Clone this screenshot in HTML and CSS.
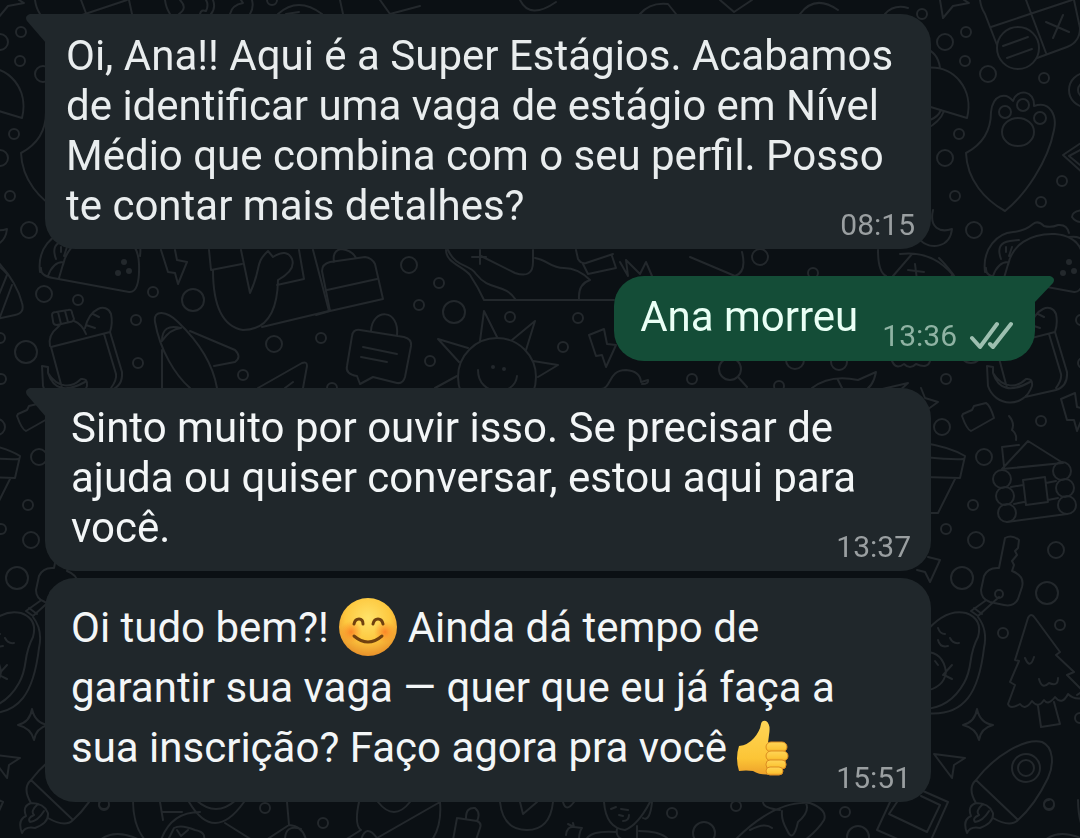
FILE: index.html
```html
<!DOCTYPE html>
<html lang="pt-BR">
<head>
<meta charset="utf-8">
<meta name="viewport" content="width=device-width, initial-scale=1">
<title>Conversa</title>
<link rel="stylesheet" href="styles.css">
</head>
<body>
<svg class="wallpaper" viewBox="0 0 1080 838" preserveAspectRatio="xMinYMin slice" aria-hidden="true">
<defs>
<g id="doodles">
<!-- bubbles -->
<g>
<circle cx="922" cy="14" r="5"/><circle cx="945" cy="42" r="8"/><circle cx="966" cy="32" r="5"/><circle cx="965" cy="61" r="5"/><circle cx="988" cy="74" r="8"/><circle cx="1044" cy="78" r="5"/><circle cx="959" cy="134" r="5"/><circle cx="945" cy="158" r="8"/><circle cx="955" cy="196" r="5"/><circle cx="974" cy="230" r="8"/><circle cx="1062" cy="181" r="5"/><circle cx="1041" cy="202" r="5"/>
<circle cx="44" cy="294" r="8"/><circle cx="78" cy="300" r="5"/><circle cx="0" cy="338" r="5"/><circle cx="26" cy="352" r="11"/><circle cx="1" cy="379" r="5"/><circle cx="153" cy="292" r="5"/><circle cx="193" cy="300" r="11"/><circle cx="136" cy="320" r="5"/><circle cx="138" cy="363" r="5"/><circle cx="274" cy="344" r="8"/><circle cx="321" cy="338" r="5"/><circle cx="243" cy="375" r="5"/><circle cx="409" cy="265" r="8"/><circle cx="439" cy="283" r="5"/><circle cx="419" cy="305" r="5"/><circle cx="454" cy="312" r="11"/><circle cx="510" cy="317" r="5"/><circle cx="578" cy="318" r="5"/><circle cx="563" cy="347" r="5"/><circle cx="430" cy="361" r="5"/><circle cx="332" cy="388" r="5"/>
<circle cx="813" cy="273" r="5"/><circle cx="692" cy="379" r="5"/><circle cx="839" cy="362" r="8"/><circle cx="795" cy="360" r="9"/><circle cx="779" cy="386" r="5"/><circle cx="760" cy="257" r="8"/>
<circle cx="942" cy="427" r="8"/><circle cx="1041" cy="421" r="5"/><circle cx="984" cy="457" r="8"/><circle cx="973" cy="505" r="5"/><circle cx="946" cy="529" r="5"/><circle cx="976" cy="540" r="8"/><circle cx="1056" cy="550" r="8"/><circle cx="962" cy="578" r="11"/><circle cx="1047" cy="593" r="11"/><circle cx="1003" cy="633" r="5"/><circle cx="1060" cy="625" r="5"/><circle cx="1080" cy="718" r="5"/><circle cx="1049" cy="804" r="5"/>
<circle cx="265" cy="808" r="5"/><circle cx="323" cy="823" r="5"/><circle cx="672" cy="813" r="5"/><circle cx="736" cy="806" r="5"/><circle cx="704" cy="833" r="11"/><circle cx="845" cy="812" r="5"/><circle cx="858" cy="837" r="11"/><circle cx="272" cy="0" r="5"/>
</g>
<!-- top strip -->
<path d="M940 0L943 18L953 6L969 3L964 0M165 0Q166 8 170 14M252 0Q254 8 250 14M180 0Q188 8 179 14M200 14Q201 9 206 11Q209 5 206 0M213 0Q216 8 211 14M230 14Q232 5 243 3L241 0M278 14Q298 -4 322 14M286 14L299 12M340 0L343 14M380 0L390 14L420 6M520 0Q530 20 556 2M640 14Q650 2 668 4L676 14M720 0L734 12L752 0M800 14Q815 -6 838 10M885 14Q894 4 908 8"/>
<path d="M980 0Q981 8 985 14L997 45M991 27L1072 0M1026 0L1046 53M1037 58L1067 47Q1080 42 1080 28L1074 0M1046 22L1069 32M1063 15L1053 38M1003 46L1028 37M1007 58L1032 49"/><circle cx="1018" cy="48" r="21"/>
<circle cx="1086" cy="90" r="17"/><circle cx="1086" cy="90" r="8"/>
<!-- mushroom, paw, kite, moon -->
<path d="M924 68C955 64 974 90 967 118L924 105M924 48Q938 52 940 68M926 129Q940 122 944 111M930 120Q938 117 941 110"/>
<path d="M966 153C985 143 991 128 991 112C993 94 1006 92 1013 101C1017 88 1035 90 1034 106C1051 100 1057 117 1054 130C1048 162 1025 195 1005 211C985 200 967 180 966 153Z"/><circle cx="1005" cy="112" r="6"/><circle cx="1023" cy="105" r="6"/><circle cx="1040" cy="118" r="6"/><ellipse cx="1018" cy="132" rx="16" ry="14"/>
<path d="M1084 141L1063 155L1084 174M1084 148L1069 156L1080 165M1084 210Q1072 211 1072 217Q1076 223 1084 222M933 210C929 228 940 233 952 229C950 248 930 250 920 240"/>
<!-- burger -->
<path d="M985 272C982 248 998 233 1013 232Q1025 231 1033 224Q1038 220 1044 226Q1051 228 1058 225Q1067 224 1069 233M1008 265C1012 245 1030 233 1055 234Q1083 236 1084 264Q1085 293 1074 292L998 278Q985 276 986 268M1001 259Q995 243 1010 241L1019 240M1008 262Q998 262 993 276M1006 247L1006 252M1012 247L1009 256M1069 237Q1088 234 1085 256M1004 278L1009 261"/>
<g class="solid"><circle cx="1069" cy="262" r="3"/><circle cx="1063" cy="273" r="3"/><circle cx="1074" cy="271" r="3"/></g>
<!-- pizza, school bag, banana -->
<path d="M-6 258Q16 280 22 303Q25 313 15 315L-4 319M7 275L-2 297M12 285L0 317"/>
<path d="M52 315Q52 312 56 312L68 310Q72 309 72 313L74 319Q73 322 70 322L57 325Q53 325 53 321ZM58 312L61 324M65 311L68 322M50 346Q48 335 57 328L61 324M74 321Q82 324 86 334M51 347L110 332M51 347L62 388M110 332L122 372Q123 386 111 390L80 397M104 334L116 374Q117 380 111 388M85 328C90 308 106 302 111 314Q113 323 110 332M93 314L99 317M86 325L95 328M42 366L48 367L48 373C58 389 72 388 81 379Q88 378 87 386C79 409 50 407 43 386ZM48 373Q56 398 85 382"/>
<!-- bolts -->
<path d="M161 250L168 272L175 273L178 284L187 262L177 260L175 250M589 335L604 329L607 344L616 345L606 367L602 355L596 356ZM1061 399L1075 393L1077 407L1086 409L1077 431L1074 420L1067 420Z"/>
<!-- glove and box -->
<path d="M209 250L211 270L242 264M241 250L250 293C262 268 254 264 268 251L273 257Q287 248 292 259Q296 270 278 280M277 285L304 279L299 250M213 270Q213 325 243 330Q277 330 278 280M262 327L329 311L313 250"/>
<!-- surfboard, boat, cake -->
<path d="M155 322C153 309 167 311 178 322C199 342 213 365 217 388M155 322C160 350 175 375 190 388M162 350V388M162 341Q162 323 181 328Q170 329 162 341M190 331L235 350Q242 357 235 362L214 366M258 388L302 363Q307 361 307 366L303 388M285 388L293 382"/>
<path d="M322 271Q322 264 330 262L365 257Q372 258 375 264L383 299L330 311ZM330 311L316 315M327 290L377 279M334 262Q332 251 341 249Q352 250 356 258"/>
<!-- note -->
<path d="M360 330L404 337Q412 339 411 346L405 377Q403 384 397 383L373 377L360 384L357 376Q345 374 347 366L352 336Q353 329 360 330ZM371 331C372 308 400 308 397 336M363 347L397 354M361 357L387 362"/>
<!-- sun -->
<circle cx="497" cy="377" r="39"/><path d="M480 341L484 311L497 337M512 340L535 321L526 350M533 361L558 365L538 377M468 348L438 339L459 362M457 376L435 388M478 370C478 397 515 397 517 376"/><g class="solid"><circle cx="493" cy="367" r="2"/><circle cx="504" cy="369" r="2"/></g>
<!-- hills and lighthouse -->
<path d="M446 250C446 263 463 266 470 275Q478 287 484 300H614M448 250C456 268 470 264 476 274C490 292 504 282 516 300M535 258C548 260 550 268 564 268Q578 268 590 280Q578 284 579 299M481 256L515 273Q533 279 533 262V250M472 257H486M480 250V264M576 250L578 259Q581 264 586 263L613 254M583 264L588 274L616 268L612 256M620 262L628 276L626 260L640 274L646 262L652 276M690 257L735 276Q747 272 742 252"/>
<!-- small animals and magnifier -->
<circle cx="730" cy="369" r="11"/><path d="M738 377L747 387M601 389C612 388 608 370 626 370Q640 371 641 382L648 380Q649 384 642 384M892 361Q896 370 904 364Q910 370 916 364Q928 369 930 361M812 388Q830 374 858 380L876 372Q873 388 862 392M878 390L908 383L898 392M838 380L842 388M878 250Q878 272 886 276M893 276L912 254M908 270L924 272M915 264L917 280M900 254Q932 250 953 275M921 388L925 398L938 402L924 412"/>
<!-- camera, pot, log cabin -->
<path d="M963 414L972 410L974 406L986 403Q990 405 994 418L971 431Q967 430 962 416ZM924 443Q950 447 965 456L960 478L924 477M924 457Q954 460 963 459M955 479L938 513H928M1009 416Q1015 423 1012 430Q1017 434 1016 440M1002 469L1028 441L1063 463ZM1004 466L1002 447L1019 445M1023 480L1045 477L1048 502L1026 505ZM1011 487L1023 485M1014 504L1024 502M1046 483L1056 481M1048 500L1058 498M1007 522L1067 514"/>
<circle cx="1002" cy="479" r="9"/><circle cx="1005" cy="496" r="9"/><circle cx="1007" cy="513" r="9"/><circle cx="1062" cy="471" r="9"/><circle cx="1065" cy="488" r="9"/><circle cx="1067" cy="505" r="9"/>
<!-- key, fish tail, avocado -->
<path d="M999 568L1005 538Q1012 534 1019 540L1018 548L1015 551L1017 555L1012 561L1014 565L1012 571Q1025 576 1022 587L1018 599Q1014 607 1004 605L990 602Q981 599 981 590L984 576Q988 567 999 568M999 597L978 616L971 611L985 601M974 608L982 614M928 557L940 560L930 582L925 572L917 570"/><circle cx="999" cy="594" r="4"/>
<path d="M924 634Q945 608 966 613Q983 619 978 637C967 658 974 665 964 683Q950 708 924 709M978 617Q988 630 984 648C979 690 966 718 924 713M938 628Q940 634 945 634M950 638Q953 644 959 643M938 640Q940 648 948 646M924 652Q943 651 946 672Q944 688 924 691M935 661L938 665M943 675L952 665M944 675L952 679"/>
<!-- tree -->
<path d="M1028 618Q1031 612 1035 618L1060 652L1056 655L1074 672L1067 675L1083 691L1077 695M1028 618L1015 660L1019 661L1010 682L1015 685L1008 704Q1010 710 1020 704Q1025 711 1032 701Q1038 709 1044 700Q1048 706 1055 697Q1062 706 1068 694Q1074 700 1083 698M1038 706L1041 727L1060 724L1054 702M1025 658Q1030 670 1034 657M1039 679Q1042 690 1049 683Q1058 687 1058 678"/>
<!-- sparkle, arrow, rocket -->
<path d="M977 709Q980 723 993 725Q981 728 979 740Q976 728 963 725Q975 722 977 709ZM934 754L965 758L954 765L952 778ZM976 780C995 755 1025 738 1042 742C1054 747 1054 765 1048 778Q1035 805 1018 820Q1010 828 993 818M976 780Q967 788 976 803M976 780L1018 820M976 803Q967 806 971 816Q962 820 967 833Q970 826 980 828Q994 823 993 813Q989 803 976 803M983 804Q975 811 979 815Q972 818 975 822Q983 821 989 811"/>
<circle cx="1026" cy="768" r="14"/><circle cx="1026" cy="768" r="8"/>
<!-- bottom strip -->
<path d="M104 800A5 5 0 1 0 109 805M133 800Q133 826 145 840M160 802L163 820M163 812H182M189 802Q214 844 244 802M196 800Q216 818 236 800M161 840Q171 812 200 812M225 823L252 840M100 840Q115 828 140 840M168 840L174 828Q181 824 195 830Q206 832 204 840M177 830L181 836L188 830M287 802L289 825L266 840M289 825Q303 826 306 840M285 840Q285 824 301 829M359 802Q354 825 361 830L345 840M361 840Q366 823 377 838L440 802M378 802Q394 822 410 802M440 802Q442 825 432 840M457 818L477 821Q482 823 480 828L476 840M457 818L453 840M466 818Q466 807 475 808Q481 813 477 821"/>
<path d="M500 802Q503 830 527 830Q550 830 553 802M520 802L523 814L537 802M563 802Q566 813 574 802M604 802Q606 828 625 830Q638 825 650 802M611 809L616 807M621 809L628 810M619 815L623 816M623 821Q629 821 629 815M643 818Q650 822 652 802M617 829Q615 838 625 840M637 826V840M586 840Q590 830 617 832M639 831Q662 831 669 840M566 835Q567 826 574 827L568 824M574 827L573 823M574 827L582 828Q579 832 579 840M735 840Q775 800 810 803Q828 810 824 820Q818 830 805 840M763 802Q763 808 780 810M782 811Q781 820 787 830Q793 844 798 822Q810 812 806 803M750 830Q765 822 772 828M890 802L877 830L900 840M897 802L889 814L927 832L940 805L921 796M923 791L948 802L931 840"/>
</g>
</defs>
<use href="#doodles"/><use href="#doodles" x="-945"/><use href="#doodles" x="945"/>
</svg>

<main class="chat">
  <article class="bubble received tailed greeting">
    <p class="text">Oi, Ana!! Aqui é a Super Estágios. Acabamos<br>de identificar uma vaga de estágio em Nível<br>Médio que combina com o seu perfil. Posso<br>te contar mais detalhes?</p>
    <footer class="meta"><time>08:15</time></footer>
    <svg class="tail" viewBox="0 0 20 30" aria-hidden="true"><path d="M20 0H4Q-2 2 1 7L20 29Z"/></svg>
  </article>

  <article class="bubble sent tailed">
    <p class="text">Ana morreu</p>
    <footer class="meta"><time>13:36</time>
      <svg class="checks" viewBox="0 0 44 30" role="img" aria-label="Entregue"><path d="M3 17L11 26L28 3M21 23L24 26L42 3"/></svg>
    </footer>
    <svg class="tail" viewBox="0 0 20 30" aria-hidden="true"><path d="M0 0H16Q22 2 19 7L0 27Z"/></svg>
  </article>

  <article class="bubble received tailed">
    <p class="text">Sinto muito por ouvir isso. Se precisar de<br>ajuda ou quiser conversar, estou aqui para<br>você.</p>
    <footer class="meta"><time>13:37</time></footer>
    <svg class="tail" viewBox="0 0 20 30" aria-hidden="true"><path d="M20 0H4Q-2 2 1 7L20 29Z"/></svg>
  </article>

  <article class="bubble received follow-up">
    <p class="text">Oi tudo bem?! <svg class="emoji" viewBox="0 0 58 58" role="img" aria-label="Rosto sorridente"><defs><radialGradient id="face" cx=".5" cy=".35" r=".65"><stop offset="0" stop-color="#ffe36a"/><stop offset=".6" stop-color="#fdc83f"/><stop offset="1" stop-color="#e8912a"/></radialGradient><radialGradient id="blush"><stop offset="0" stop-color="#fb7a24" stop-opacity=".85"/><stop offset="1" stop-color="#fb8a24" stop-opacity="0"/></radialGradient></defs><circle cx="29" cy="29" r="29" fill="url(#face)"/><circle cx="12" cy="34" r="11" fill="url(#blush)"/><circle cx="46" cy="34" r="11" fill="url(#blush)"/><g fill="none" stroke="#70410f" stroke-linecap="round"><path d="M15 26Q16 21 20 21Q24 21 24 26M34 26Q35 21 39 21Q43 21 44 26" stroke-width="3"/><path d="M15 38Q29 50 43 38" stroke-width="3"/></g></svg> Ainda dá tempo de<br>garantir sua vaga — quer que eu já faça a<br>sua inscrição? Faço agora pra você <svg class="emoji thumb" viewBox="0 0 52 56" role="img" aria-label="Polegar para cima"><defs><linearGradient id="skin" x2="0" y2="1"><stop offset="0" stop-color="#ffd557"/><stop offset=".7" stop-color="#fcc536"/><stop offset="1" stop-color="#eda12a"/></linearGradient></defs><path d="M2 26Q11 25 17 18Q23 11 24 4Q25 0 29 1Q34 4 32 15L31 23H36V54Q24 56 16 51Q9 50 2 51Q-2 38 2 26Z" fill="url(#skin)"/><g fill="url(#skin)" stroke="#dc8d20" stroke-width="1"><rect x="29" y="22" width="21" height="10" rx="5"/><rect x="29" y="31" width="22" height="10" rx="5"/><rect x="29" y="40" width="20" height="9" rx="4"/><rect x="29" y="47" width="17" height="8" rx="4"/></g></svg></p>
    <footer class="meta"><time>15:51</time></footer>
  </article>
</main>
</body>
</html>
```

FILE: styles.css
```css
* { box-sizing: border-box; }

body {
  margin: 0;
  min-height: 100vh;
  background: #0b1014;
  color: #f3f6f7;
  font-family: Roboto, "Noto Sans", sans-serif;
  overflow-x: hidden;
}

.wallpaper {
  position: fixed;
  inset: 0;
  width: 100%;
  height: 100%;
  z-index: -1;
  fill: none;
  stroke: #23282c;
  stroke-width: 2;
  stroke-linecap: round;
  stroke-linejoin: round;
}

.solid { fill: #23282c; stroke: none; }

.chat {
  display: flex;
  flex-direction: column;
  align-items: flex-start;
  padding: 14px 45px 36px;
}

.bubble {
  position: relative;
  display: grid;
  border-radius: 30px;
  padding: 15px 20px 18px 26px;
}

.received {
  width: 89.5%;
  background: #20272b;
  color: #f3f6f7;
}

.received.tailed { border-top-left-radius: 0; }

.greeting {
  padding: 17px 16px 18px 21px;
  color: #e9edee;
}

.sent {
  grid-template-columns: auto auto;
  column-gap: 24px;
  align-self: flex-end;
  margin: 27px 0;
  padding: 16px 22px 19px 26px;
  background: #144d37;
  color: #e9fff5;
  border-top-right-radius: 0;
}

.follow-up {
  margin-top: 7px;
  padding: 20px 20px 24px 26px;
}

.text {
  grid-row: 1;
  grid-column: 1;
  margin: 0;
  font-size: 42px;
  line-height: 50px;
}

.follow-up .text { line-height: 60px; }

.meta {
  grid-row: 1;
  grid-column: 1;
  align-self: end;
  justify-self: end;
  display: flex;
  align-items: center;
  gap: 12px;
  margin-bottom: -12px;
  color: #9a9fa1;
  font-size: 30px;
  line-height: 36px;
}

.follow-up .meta { margin-bottom: -18px; }

.sent .meta {
  grid-column: 2;
  color: #8fb3a3;
}

.tail {
  position: absolute;
  top: 0;
  width: 20px;
  height: 30px;
  fill: #20272b;
}

.received .tail { right: 100%; margin-right: -1px; }

.sent .tail {
  left: 100%;
  margin-left: -1px;
  fill: #144d37;
}

.checks {
  width: 44px;
  height: 30px;
  fill: none;
  stroke: #9dbfb0;
  stroke-width: 4;
  stroke-linecap: round;
  stroke-linejoin: round;
}

.emoji {
  width: 58px;
  height: 58px;
  vertical-align: -14px;
}

.thumb {
  width: 52px;
  height: 56px;
}
```
